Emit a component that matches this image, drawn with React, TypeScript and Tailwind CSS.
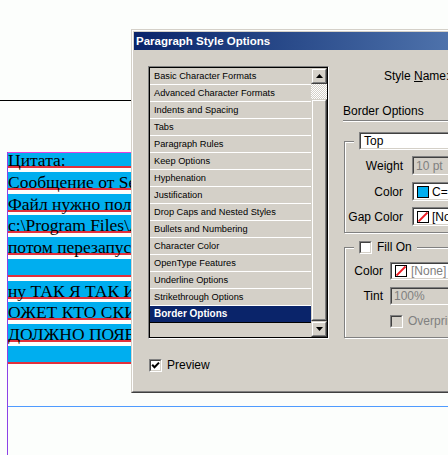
import React from 'react';

const listItems = [
  'Basic Character Formats',
  'Advanced Character Formats',
  'Indents and Spacing',
  'Tabs',
  'Paragraph Rules',
  'Keep Options',
  'Hyphenation',
  'Justification',
  'Drop Caps and Nested Styles',
  'Bullets and Numbering',
  'Character Color',
  'OpenType Features',
  'Underline Options',
  'Strikethrough Options',
  'Border Options',
];

const paragraphs = [
  'Цитата:',
  'Сообщение от Serg',
  'Файл нужно положить в',
  'c:\\Program Files\\Adobe',
  'потом перезапустить',
  '',
  'ну ТАК Я ТАК И СДЕЛАЛ',
  'ОЖЕТ КТО СКИНУТЬ',
  'ДОЛЖНО ПОЯВИТЬСЯ',
  '',
];

function Sunken({ className = '', children }: { className?: string; children?: React.ReactNode }) {
  return (
    <div className={`border border-t-[#808080] border-l-[#808080] border-b-white border-r-white ${className}`}>
      <div className="h-full w-full border border-t-[#404040] border-l-[#404040] border-b-[#d4d0c8] border-r-[#d4d0c8] flex items-center overflow-hidden">
        {children}
      </div>
    </div>
  );
}

function Raised({ className = '', children }: { className?: string; children?: React.ReactNode }) {
  return (
    <div className={`border border-t-[#d4d0c8] border-l-[#d4d0c8] border-b-[#404040] border-r-[#404040] bg-[#d4d0c8] ${className}`}>
      <div className="h-full w-full border border-t-white border-l-white border-b-[#808080] border-r-[#808080] flex items-center justify-center">
        {children}
      </div>
    </div>
  );
}

function Checkbox({ checked = false, disabled = false }: { checked?: boolean; disabled?: boolean }) {
  return (
    <div className="w-[13px] h-[13px] shrink-0 border border-t-[#808080] border-l-[#808080] border-b-white border-r-white">
      <div
        className={`h-full w-full border border-t-[#404040] border-l-[#404040] border-b-[#d4d0c8] border-r-[#d4d0c8] ${
          disabled ? 'bg-[#d4d0c8]' : 'bg-white'
        }`}
      >
        {checked && (
          <svg width="9" height="9" viewBox="0 0 9 9">
            <path d="M1.2 3.8 L3.5 6.3 L8 1.6" fill="none" stroke="#000" strokeWidth="2" />
          </svg>
        )}
      </div>
    </div>
  );
}

function NoneSwatch() {
  return (
    <svg width="12" height="12" viewBox="0 0 12 12" className="shrink-0">
      <rect x="0.5" y="0.5" width="11" height="11" fill="#fff" stroke="#000" />
      <path d="M1.5 10.5 L10.5 1.5" stroke="#ee1c24" strokeWidth="1.8" />
    </svg>
  );
}

function Arrow({ up }: { up?: boolean }) {
  return (
    <svg width="7" height="4" viewBox="0 0 7 4">
      <path d={up ? 'M0 4 L3.5 0 L7 4 Z' : 'M0 0 L3.5 4 L7 0 Z'} fill="#000" />
    </svg>
  );
}

function ListBox() {
  return (
    <div className="w-[181px] h-[273px] border border-t-[#808080] border-l-[#808080] border-b-white border-r-white">
      <div className="h-full w-full border border-black flex bg-[#d4d0c8]">
        <div className="flex-1 flex flex-col">
          {listItems.map((item, i) => {
            const selected = i === listItems.length - 1;
            return (
              <div
                key={item}
                className={`h-[17px] shrink-0 border-b pl-[4px] leading-[16px] whitespace-nowrap ${
                  selected
                    ? 'bg-[#0a246a] text-white font-bold text-[10px] border-black'
                    : 'text-black text-[9.25px] border-white'
                }`}
              >
                {item}
              </div>
            );
          })}
        </div>
        <div className="w-[16px] flex flex-col">
          <Raised className="h-[16px] shrink-0">
            <Arrow up />
          </Raised>
          <div className="h-[15px] shrink-0 bg-[repeating-conic-gradient(#ffffff_0%_25%,#d4d0c8_0%_50%)] bg-size-[2px_2px]" />
          <Raised className="flex-1" />
          <Raised className="h-[16px] shrink-0">
            <Arrow />
          </Raised>
        </div>
      </div>
    </div>
  );
}

function GroupBox({ className = '', children }: { className?: string; children?: React.ReactNode }) {
  return (
    <div className={`ml-[1px] border border-[#808080] shadow-[inset_1px_1px_0_#ffffff,1px_1px_0_#ffffff] ${className}`}>
      {children}
    </div>
  );
}

function Dialog() {
  return (
    <div className="absolute left-[131px] top-[29px] w-[320px] h-[364px] border border-t-[#d4d0c8] border-l-[#d4d0c8] border-b-[#404040] border-r-[#404040]">
      <div className="h-full w-full border border-t-white border-l-white border-b-[#808080] border-r-[#808080] bg-[#d4d0c8] p-px overflow-hidden">
        <div className="h-[18px] bg-linear-to-r from-[#0a246a] to-[#4e72ab] pl-[2px] text-white font-bold text-[11.5px] leading-[18px] whitespace-nowrap">
          Paragraph Style Options
        </div>
        <div className="flex text-[12px] text-black whitespace-nowrap">
          <div className="pl-[14px] pt-[16px] shrink-0">
            <ListBox />
            <div className="mt-[20px] ml-[1px] flex items-center">
              <Checkbox checked />
              <span className="ml-[5px] leading-[13px]">Preview</span>
            </div>
          </div>
          <div className="ml-[14px] w-[220px] shrink-0 flex flex-col">
            <div className="mt-[19px] pl-[41px] leading-[14px]">
              Style <span className="underline underline-offset-1">N</span>ame:
            </div>
            <div className="mt-[21px] leading-[14px]">Border Options</div>
            <div className="mt-[2px] h-[2px] border-t border-t-[#808080] border-b border-b-white" />

            <GroupBox className="mt-[19px] h-[92px]">
              <div className="-mt-[10px] ml-[9px] pl-[5px] bg-[#d4d0c8]">
                <Sunken className="h-[18px] bg-white">
                  <span className="pl-[3px] leading-[14px]">Top</span>
                </Sunken>
              </div>
              <div className="mt-[6px] flex items-center h-[19px]">
                <span className="w-[58px] text-right">Weight</span>
                <Sunken className="ml-[9px] h-full flex-1 bg-[#d4d0c8]">
                  <span className="pl-[2px] text-[#808080]">10 pt</span>
                </Sunken>
              </div>
              <div className="mt-[7px] flex items-center h-[19px]">
                <span className="w-[58px] text-right">Color</span>
                <Sunken className="ml-[9px] h-full flex-1 bg-white">
                  <div className="ml-[3px] w-[12px] h-[12px] shrink-0 bg-[#00aeef] border border-black" />
                  <span className="ml-[3px]">C=100 M=0 Y=0 K=0</span>
                </Sunken>
              </div>
              <div className="mt-[6px] flex items-center h-[19px]">
                <span className="w-[58px] text-right">Gap Color</span>
                <Sunken className="ml-[9px] h-full flex-1 bg-white">
                  <div className="ml-[3px]">
                    <NoneSwatch />
                  </div>
                  <span className="ml-[3px]">[None]</span>
                </Sunken>
              </div>
            </GroupBox>

            <GroupBox className="mt-[14px] h-[91px]">
              <div className="-mt-[8px] ml-[9px] px-[5px] w-fit h-[14px] flex items-center bg-[#d4d0c8]">
                <Checkbox />
                <span className="ml-[5px] leading-[14px]">Fill On</span>
              </div>
              <div className="mt-[8px] flex items-center h-[18px]">
                <span className="w-[38px] text-right">Color</span>
                <Sunken className="ml-[7px] h-full flex-1 bg-white">
                  <div className="ml-[3px]">
                    <NoneSwatch />
                  </div>
                  <span className="ml-[4px] text-[#808080]">[None]</span>
                </Sunken>
              </div>
              <div className="mt-[7px] flex items-center h-[18px]">
                <span className="w-[38px] text-right">Tint</span>
                <Sunken className="ml-[7px] h-full flex-1 bg-[#d4d0c8]">
                  <span className="pl-[2px] text-[#808080]">100%</span>
                </Sunken>
              </div>
              <div className="mt-[10px] ml-[45px] flex items-center">
                <Checkbox disabled />
                <span className="ml-[5px] leading-[13px] text-[#808080]">Overprint Fill</span>
              </div>
            </GroupBox>
          </div>
        </div>
      </div>
    </div>
  );
}

export default function App() {
  return (
    <div className="relative w-[448px] h-[455px] bg-[#fcfefc] overflow-hidden font-['Liberation_Sans',Arial,sans-serif]">
      <div className="h-[100px]" />
      <div className="h-px w-[140px] bg-black" />
      <div className="ml-[7px] mt-[51px] h-[303px] border-l border-[#8c42e6]">
        <div className="w-[125px] overflow-hidden border-t border-[#e43ee0] flex flex-col gap-[3.75px] font-['Liberation_Serif','Times_New_Roman',serif] text-[17.5px] text-black">
          {paragraphs.map((p, i) => {
            const first = i === 0;
            return (
              <div
                key={i}
                className={`bg-[#00aeef] border-b-2 border-[#e2303c] whitespace-nowrap ${
                  first ? 'h-[15px] leading-[14px]' : 'h-[18px] leading-[16px] pt-[2px]'
                }`}
              >
                {p || '\u00a0'}
              </div>
            );
          })}
        </div>
        <div className="mt-[42px] h-px bg-[#4f9bff]" />
      </div>
      <Dialog />
    </div>
  );
}
